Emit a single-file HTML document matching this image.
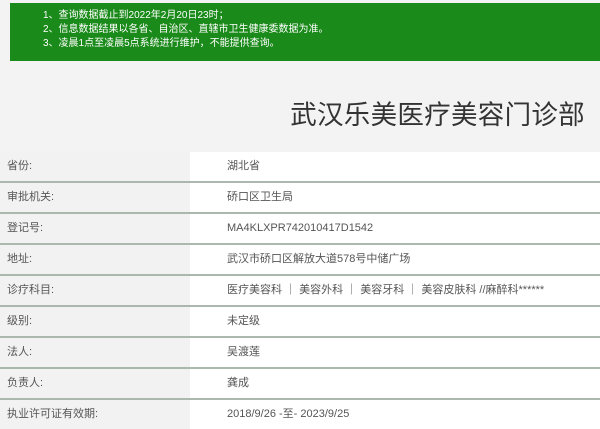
<!DOCTYPE html>
<html><head><meta charset="utf-8"><style>
body{margin:0;width:600px;height:426px;background:#f3f3f3;font-family:"Liberation Sans","Noto Sans CJK SC",sans-serif;overflow:hidden;position:relative}
.g{position:absolute;left:10px;top:3px;width:590px;height:58px;background:#1a8a1a;color:#fff;font-size:10px;line-height:14px;padding-top:6px;box-sizing:border-box}
.g div{padding-left:33px}
h1{position:absolute;right:15px;top:93px;margin:0;font-weight:normal;font-size:26.5px;color:#333;letter-spacing:0.3px}
.t{position:absolute;left:0;top:152px;width:600px}
.r{height:29px;border-bottom:2px solid #aab8ae;display:flex;font-size:11px;color:#555;line-height:29px}
.r .a{width:190px;padding-left:7px;box-sizing:border-box;background:#f2f2f2}
.r .b{flex:1;background:#fff;padding-left:37px}
.r:last-child{border-bottom:none}
</style></head><body>
<div class="g"><div>1、查询数据截止到2022年2月20日23时；</div><div>2、信息数据结果以各省、自治区、直辖市卫生健康委数据为准。</div><div>3、凌晨1点至凌晨5点系统进行维护，不能提供查询。</div></div>
<h1>武汉乐美医疗美容门诊部</h1>
<div class="t">
<div class="r"><div class="a">省份:</div><div class="b">湖北省</div></div>
<div class="r"><div class="a">审批机关:</div><div class="b">硚口区卫生局</div></div>
<div class="r"><div class="a">登记号:</div><div class="b">MA4KLXPR742010417D1542</div></div>
<div class="r"><div class="a">地址:</div><div class="b">武汉市硚口区解放大道578号中储广场</div></div>
<div class="r"><div class="a">诊疗科目:</div><div class="b">医疗美容科 ｜ 美容外科 ｜ 美容牙科 ｜ 美容皮肤科 //麻醉科******</div></div>
<div class="r"><div class="a">级别:</div><div class="b">未定级</div></div>
<div class="r"><div class="a">法人:</div><div class="b">吴渡莲</div></div>
<div class="r"><div class="a">负责人:</div><div class="b">龚成</div></div>
<div class="r"><div class="a">执业许可证有效期:</div><div class="b">2018/9/26 -至- 2023/9/25</div></div>
</div>
</body></html>
